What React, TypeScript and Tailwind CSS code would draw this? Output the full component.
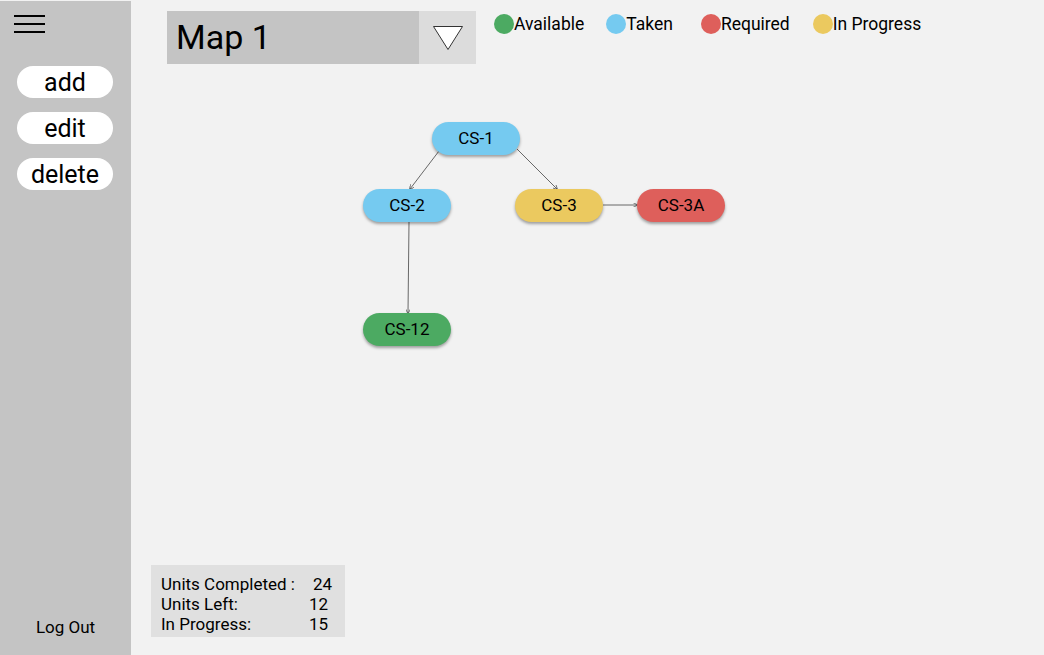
import React from "react";

const nodes = [
  { id: "CS-1", x: 301, y: 122, color: "bg-[#75caf0]" },
  { id: "CS-2", x: 232, y: 189, color: "bg-[#75caf0]" },
  { id: "CS-3", x: 384, y: 189, color: "bg-[#ebc95f]" },
  { id: "CS-3A", x: 506, y: 189, color: "bg-[#de5f5b]" },
  { id: "CS-12", x: 232, y: 313, color: "bg-[#4caa62]" },
];

const legend = [
  { label: "Available", color: "bg-[#4caa62]", gap: "mr-[22px]" },
  { label: "Taken", color: "bg-[#75caf0]", gap: "mr-[28px]" },
  { label: "Required", color: "bg-[#de5f5b]", gap: "mr-[23px]" },
  { label: "In Progress", color: "bg-[#ebc95f]", gap: "" },
];

const App = () => {
  return (
    <div
      className="flex w-[1044px] h-[655px] bg-[#f2f2f2] text-black overflow-hidden"
      style={{ fontFamily: "Roboto, 'Liberation Sans', sans-serif" }}
    >
      {/* sidebar */}
      <div className="flex flex-col w-[131px] mt-px bg-[#c4c4c4]">
        <div className="flex flex-col gap-[6px] ml-[14px] mt-[14px] w-[31px]">
          <div className="h-[2px] bg-black" />
          <div className="h-[2px] bg-black" />
          <div className="h-[2px] bg-black" />
        </div>
        <div className="flex flex-col gap-[14px] mt-[33px] ml-[17px]">
          {["add", "edit", "delete"].map((b) => (
            <div
              key={b}
              className="w-[96px] h-[32px] rounded-full bg-white flex items-center justify-center text-[25px] leading-none"
            >
              {b}
            </div>
          ))}
        </div>
        <div className="mt-auto mb-[18px] text-center text-[17px] leading-5">Log Out</div>
      </div>

      {/* main */}
      <div className="relative flex-1">
        <div className="flex items-start">
          <div className="flex ml-[36px] mt-[11px] h-[53px]">
            <div className="w-[252px] bg-[#c4c4c4] flex items-center pl-[9px] text-[34px]">Map 1</div>
            <div className="w-[57px] bg-[#dcdcdc] flex items-center justify-center">
              <svg width="32" height="26" viewBox="0 0 32 26">
                <path d="M1.5 1.5 L30.5 1.5 L16 24.5 Z" fill="#fff" stroke="#333" strokeWidth="1" />
              </svg>
            </div>
          </div>
          <div className="flex items-center ml-[18px] mt-[14px] text-[17.5px] leading-5">
            {legend.map((l) => (
              <div key={l.label} className={`flex items-center ${l.gap}`}>
                <span className={`w-[20px] h-[20px] rounded-full ${l.color}`} />
                <span>{l.label}</span>
              </div>
            ))}
          </div>
        </div>

        {/* edges */}
        <svg className="absolute inset-0" width="913" height="655">
          <defs>
            <marker id="ah" markerWidth="6" markerHeight="6" refX="5" refY="3" orient="auto">
              <path d="M0 0 L6 3 L0 6" fill="none" stroke="#333" strokeWidth="0.8" />
            </marker>
          </defs>
          <g stroke="#444" strokeWidth="0.8" fill="none">
            <line x1="308" y1="151" x2="279" y2="189" markerEnd="url(#ah)" />
            <line x1="386" y1="149" x2="426" y2="189" markerEnd="url(#ah)" />
            <line x1="472" y1="205" x2="506" y2="205" markerEnd="url(#ah)" />
            <line x1="278" y1="222" x2="277" y2="313" markerEnd="url(#ah)" />
          </g>
        </svg>

        {/* nodes */}
        {nodes.map((n) => (
          <div
            key={n.id}
            className={`absolute w-[88px] h-[33px] rounded-full flex items-center justify-center text-[17px] shadow-[0_2px_3px_rgba(0,0,0,0.35)] ${n.color}`}
            style={{ left: n.x, top: n.y }}
          >
            {n.id}
          </div>
        ))}

        {/* stats */}
        <div className="absolute left-[20px] top-[565px] w-[194px] h-[72px] bg-[#e0e0e0] pl-[10px] pr-[13px] pt-[9px] text-[17px] leading-5">
          <div className="flex justify-between"><span>Units Completed :</span><span>24</span></div>
          <div className="flex justify-between"><span>Units Left:</span><span className="mr-[4px]">12</span></div>
          <div className="flex justify-between"><span>In Progress:</span><span className="mr-[4px]">15</span></div>
        </div>
      </div>
    </div>
  );
};

export default App;
